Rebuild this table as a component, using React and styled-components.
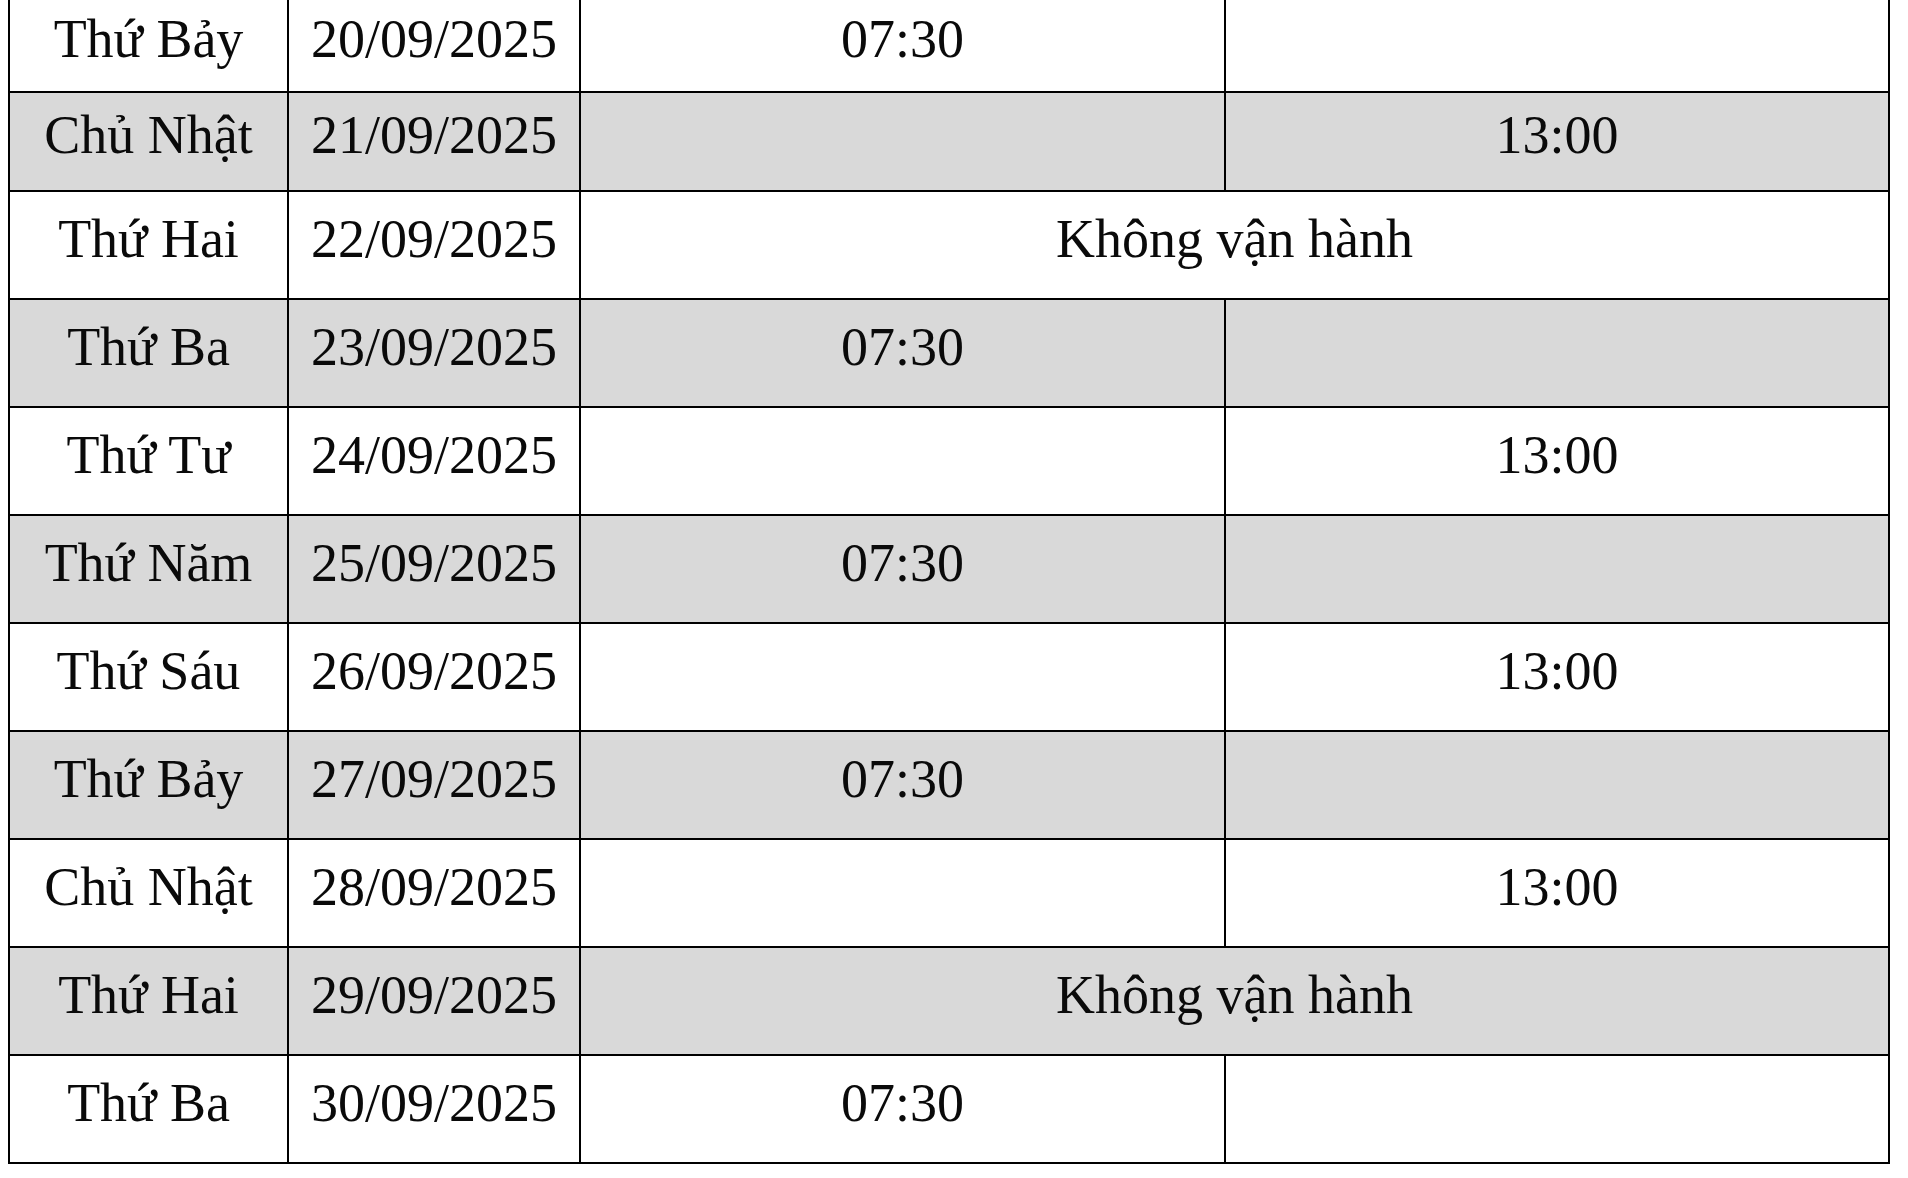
import React from "react";
import styled, { createGlobalStyle } from "styled-components";

const GlobalStyle = createGlobalStyle`
  html, body {
    margin: 0;
    padding: 0;
    background: #ffffff;
  }
  body {
    font-family: "Liberation Serif", "Times New Roman", serif;
    color: #000;
  }
`;

const Page = styled.div`
  width: 1908px;
  height: 1178px;
  overflow: hidden;
  background: #ffffff;
  padding-left: 8px;
  box-sizing: border-box;
`;

const Grid = styled.div`
  display: grid;
  width: 1882px;
  box-sizing: border-box;
  grid-template-columns: 277px 290px 643px 662px;
  grid-template-rows: 91px 97px repeat(9, 106px);
  gap: 2px;
  padding: 0 2px 2px 2px;
  background: #000;
`;

const Cell = styled.div`
  display: flex;
  align-items: center;
  justify-content: center;
  padding-bottom: 13px;
  box-sizing: border-box;
  background: ${({ $shade }) => ($shade ? "#d9d9d9" : "#ffffff")};
  grid-column: ${({ $span }) => ($span ? "3 / 5" : "auto")};
  font-family: "Liberation Serif", "Times New Roman", serif;
  font-size: 54px;
  line-height: 54px;
  color: #0a0a0a;
  white-space: nowrap;
`;

const rows = [
  { day: "Thứ Bảy", date: "20/09/2025", am: "07:30", pm: "" },
  { day: "Chủ Nhật", date: "21/09/2025", am: "", pm: "13:00" },
  { day: "Thứ Hai", date: "22/09/2025", off: true },
  { day: "Thứ Ba", date: "23/09/2025", am: "07:30", pm: "" },
  { day: "Thứ Tư", date: "24/09/2025", am: "", pm: "13:00" },
  { day: "Thứ Năm", date: "25/09/2025", am: "07:30", pm: "" },
  { day: "Thứ Sáu", date: "26/09/2025", am: "", pm: "13:00" },
  { day: "Thứ Bảy", date: "27/09/2025", am: "07:30", pm: "" },
  { day: "Chủ Nhật", date: "28/09/2025", am: "", pm: "13:00" },
  { day: "Thứ Hai", date: "29/09/2025", off: true },
  { day: "Thứ Ba", date: "30/09/2025", am: "07:30", pm: "" },
];

export default function App() {
  return (
    <>
      <GlobalStyle />
      <Page>
        <Grid>
          {rows.map((r, i) => {
            const shade = i % 2 === 1;
            return (
              <React.Fragment key={r.date}>
                <Cell $shade={shade}>{r.day}</Cell>
                <Cell $shade={shade}>{r.date}</Cell>
                {r.off ? (
                  <Cell $shade={shade} $span>
                    Không vận hành
                  </Cell>
                ) : (
                  <>
                    <Cell $shade={shade}>{r.am}</Cell>
                    <Cell $shade={shade}>{r.pm}</Cell>
                  </>
                )}
              </React.Fragment>
            );
          })}
        </Grid>
      </Page>
    </>
  );
}
